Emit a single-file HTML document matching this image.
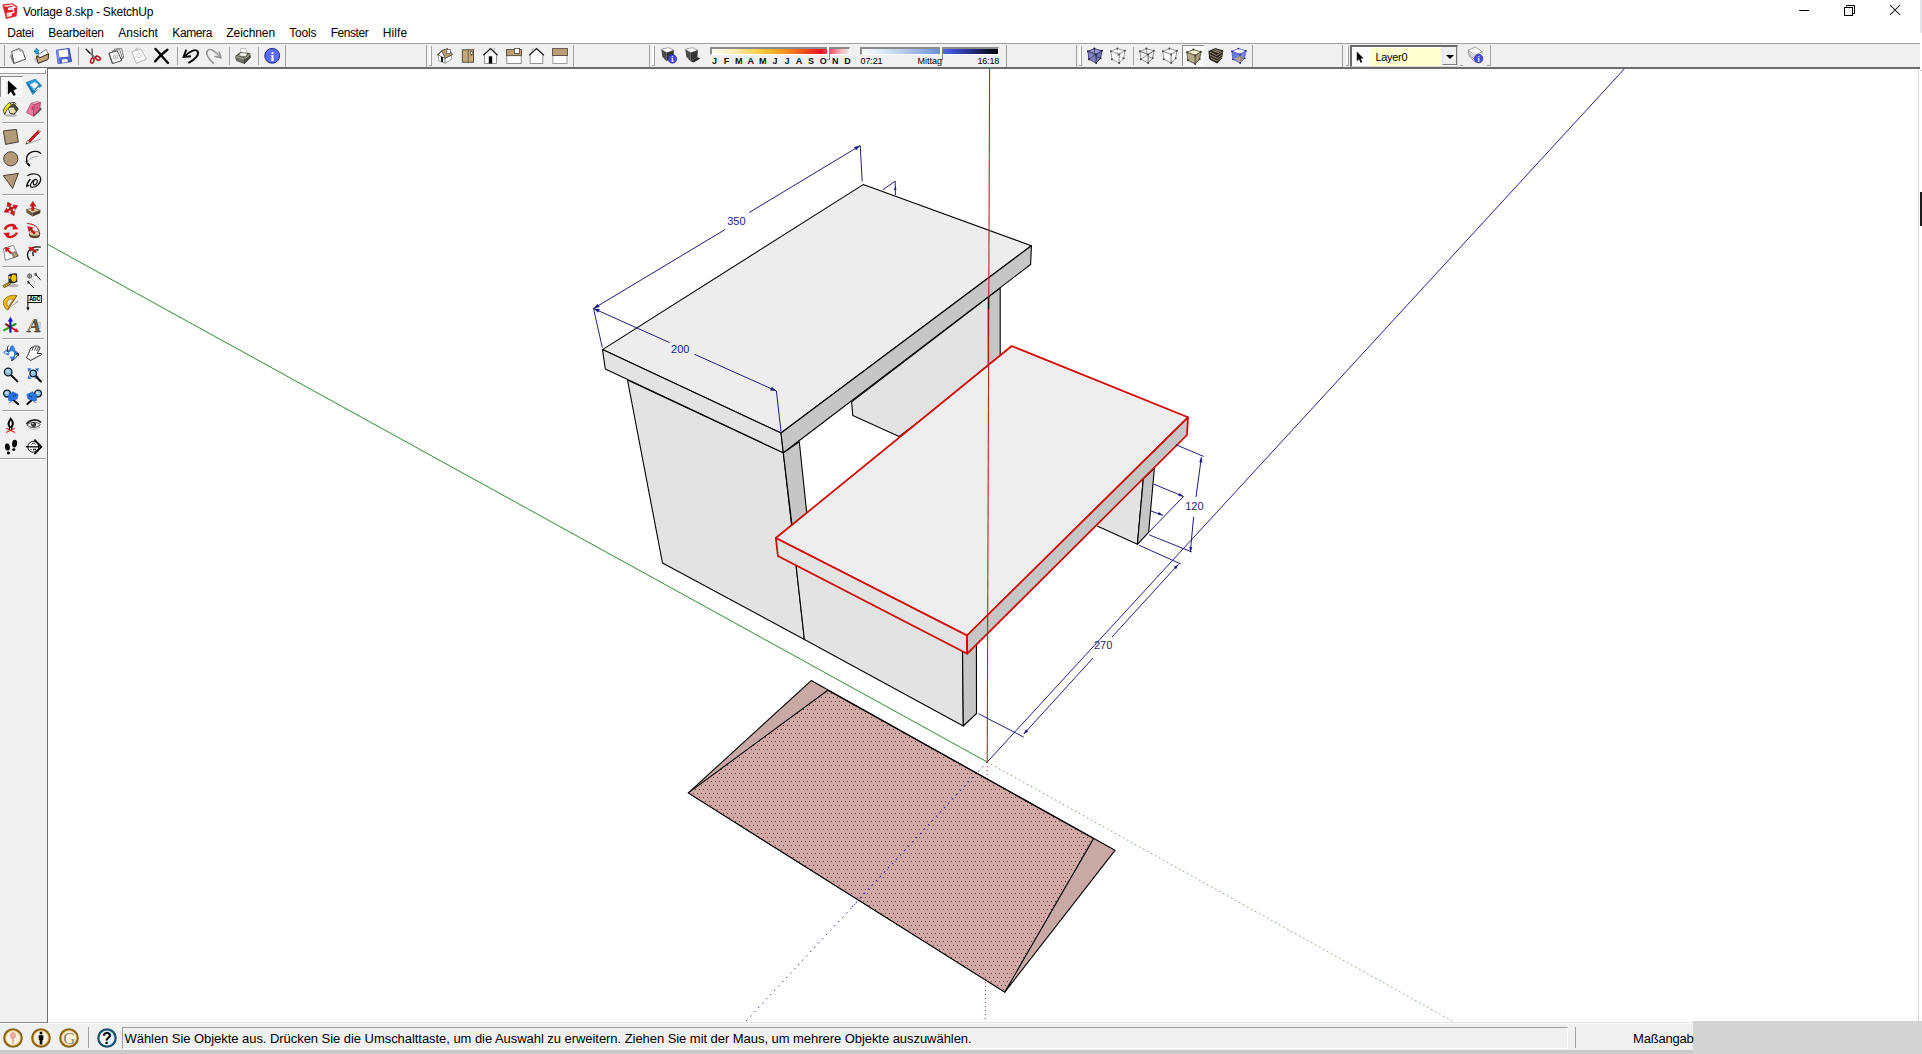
<!DOCTYPE html>
<html lang="de"><head><meta charset="utf-8"><title>Vorlage 8.skp - SketchUp</title>
<style>
*{box-sizing:border-box}
html,body{margin:0;padding:0}
body{width:1922px;height:1054px;overflow:hidden;background:#fff;font-family:"Liberation Sans",sans-serif;font-size:12px;color:#000;position:relative}
.abs{position:absolute}
.t{position:absolute;white-space:nowrap;line-height:1}
#title{left:23px;top:6px;font-size:12px;letter-spacing:-0.22px}
.menu{top:27px;font-size:12px}
#tb{left:0;top:43px;width:1920px;height:26px;background:#f0f0f0;border-top:1px solid #a0a0a0;border-bottom:2px solid #6d6d6d}
#ltb{left:0;top:68px;width:48px;height:955px;background:#f0f0f0;border-right:1.6px solid #6d6d6d;border-bottom:1px solid #8c8c8c}
#status{left:0;top:1022px;width:1920px;height:28px;background:#f0f0f0;border-top:1px solid #e6e6e6;box-shadow:inset 0 1px 0 #fcfcfc}
#botstrip{left:0;top:1050px;width:1922px;height:4px;background:#c9c9c9}
#greyblk{left:1693px;top:1021px;width:229px;height:33px;background:#d3d3d3}
#redge{left:1918px;top:69px;width:1px;height:952px;background:#d9d9d9}
#mon2{left:1920px;top:0;width:2px;height:33px;background:#e3e5ea}
#mon2b{left:1920px;top:192px;width:2px;height:34px;background:#1a1a1a}
#mon2c{left:1920px;top:70px;width:2px;height:1px;background:#c8c8c8}
.vsep{position:absolute;width:1px;background:#a0a0a0;top:46px;height:20px}
.vsepw{position:absolute;width:1px;background:#fff;top:46px;height:20px}
.hsep{position:absolute;left:3px;width:41px;height:1px;background:#a0a0a0}

.ic{position:absolute;overflow:visible}
.sl{position:absolute;height:8px;border-top:2px solid #8c8c8c;border-left:2px solid #8c8c8c;border-bottom:1px solid #fff;border-right:1px solid #fff}
.mon{position:absolute;top:56.5px;font-size:9px;font-weight:bold;line-height:1;width:12px;text-align:center;color:#111}
.tm{position:absolute;top:57px;font-size:9px;line-height:1;color:#000;white-space:nowrap}
</style></head>
<body>
<div class="t" id="title">Vorlage 8.skp - SketchUp</div>
<div class="t menu" style="left:7.3px;letter-spacing:-0.32px">Datei</div>
<div class="t menu" style="left:48.3px;letter-spacing:-0.26px">Bearbeiten</div>
<div class="t menu" style="left:118.3px;letter-spacing:0.05px">Ansicht</div>
<div class="t menu" style="left:172.3px;letter-spacing:-0.39px">Kamera</div>
<div class="t menu" style="left:226.3px;letter-spacing:-0.08px">Zeichnen</div>
<div class="t menu" style="left:289.3px;letter-spacing:-0.20px">Tools</div>
<div class="t menu" style="left:330.7px;letter-spacing:-0.44px">Fenster</div>
<div class="t menu" style="left:382.7px;letter-spacing:0.12px">Hilfe</div>
<div class="abs" id="tb"></div>
<div class="abs" id="status"></div>
<div class="abs" id="ltb"></div>
<div class="abs" id="botstrip"></div>
<div class="abs" id="greyblk"></div><div class="abs" id="redge"></div><div class="abs" id="mon2"></div><div class="abs" id="mon2b"></div><div class="abs" id="mon2c"></div>
<svg class="abs" style="left:0;top:0" width="1922" height="1054" viewBox="0 0 1922 1054">
<defs><clipPath id="vp"><rect x="48" y="69" width="1870" height="953"/></clipPath>
<pattern id="dots" width="4" height="8" patternUnits="userSpaceOnUse"><rect width="4" height="8" fill="#cfaaa6"/><rect x="1" y="1" width="1" height="1" fill="#7c3034"/><rect x="3" y="5" width="1" height="1" fill="#7c3034"/></pattern>
</defs>
<g clip-path="url(#vp)" stroke-linejoin="round" stroke-linecap="butt">
<g fill="none" stroke-width="1">
<line x1="987.2" y1="762.0" x2="48" y2="244.5" stroke="#2a902a"/>
<line x1="987.2" y1="762.0" x2="1627" y2="66" stroke="#20208f"/>
<line x1="987.2" y1="762.0" x2="1500" y2="1047.6" stroke="#3a9a3a" stroke-dasharray="1.2 3.38"/>
<line x1="987.2" y1="762.0" x2="720" y2="1049" stroke="#20208f" stroke-dasharray="1.4 4.47"/>
<line x1="987.2" y1="762.0" x2="985.2" y2="1030" stroke="#b03030" stroke-dasharray="1.2 2.8"/>
</g>
<polygon points="811.2,680.6 1115.0,850.3 1004.8,992.1 688.3,792.9" fill="#c9a9a6" stroke="#000" stroke-width="1.1"/>
<polygon points="827.8,690.2 1093.5,838.6 1004.8,992.1 688.3,792.9" fill="url(#dots)" stroke="#000" stroke-width="1.1"/>
<line x1="973" y1="777" x2="850" y2="909" stroke="#3a2a9a" stroke-width="1.1" stroke-dasharray="1.4 4.47"/>
<g stroke="#000" stroke-width="1.1">
<polygon points="851.6,401.9 988.4,297.0 988.4,370.0 899.1,436.5 852.8,415.6" fill="#e3e3e3"/>
<polygon points="988.4,297.0 1000.2,288.1 1000.2,356.0 988.4,366.0" fill="#c6c6c6"/>
<polygon points="627.5,380.0 783.3,452.8 804.4,639.5 662.5,563.0" fill="#e3e3e3"/>
<polygon points="783.3,452.8 799.3,441.8 808.0,525.0 792.0,525.0" fill="#c6c6c6"/>
<polygon points="795.5,560.0 962.5,645.0 963.3,726.0 804.4,639.5" fill="#e3e3e3"/>
<polygon points="962.5,645.0 976.4,633.0 976.5,713.5 963.3,726.0" fill="#c6c6c6"/>
<polygon points="1097.2,526.0 1137.4,544.3 1143.3,478.9 1103.0,460.0" fill="#e3e3e3" stroke="none"/>
<polyline points="1097.2,526.0 1137.4,544.3 1143.3,478.9" fill="none"/>
<polygon points="1143.3,478.9 1154.4,468.3 1148.6,532.4 1137.4,544.3" fill="#c6c6c6"/>
<polygon points="863.2,184.6 1031.4,245.7 781.0,433.0 602.5,349.6" fill="#ededed"/>
<polygon points="602.5,349.6 781.0,433.0 783.3,452.8 605.3,369.0" fill="#e3e3e3"/>
<polygon points="781.0,433.0 1031.4,245.7 1030.6,264.5 783.3,452.8" fill="#c6c6c6"/>
</g>
<g stroke="#d60000" stroke-width="1.7">
<polygon points="1011.7,346.0 1188.0,417.3 967.0,635.5 775.8,538.0" fill="#eeeeee"/>
<polygon points="775.8,538.0 967.0,635.5 967.3,653.7 777.9,556.0" fill="#e3e3e3"/>
<polygon points="967.0,635.5 1188.0,417.3 1187.0,435.0 967.3,653.7" fill="#c6c6c6"/>
</g>
<line x1="987.2" y1="762.0" x2="989.6" y2="66" stroke="#b92626" stroke-width="1.1"/>
<line x1="988.7" y1="296" x2="988.6" y2="309" stroke="#301010" stroke-width="1.2"/>
<g stroke="#1e1e80" stroke-width="1" fill="none">
<path d="M593.5 308.5L725 229.6M749.2 212.5L860.2 145.6M860.2 145.6L862.2 181.5M593.5 308.5L602.3 347.5"/>
<path d="M593.5 308.5L669.6 342.6M694.5 354.3L776.4 391M776.4 391L781 431.5"/>
<path d="M883 189.7L895.2 181.2M895.2 181L895.4 195"/>
<path d="M1175.8 444.7L1203.6 456.4M1201.4 457.2L1196 497M1193.6 517L1190.3 552M1149.3 534.9L1192 552"/>
<path d="M1153.6 484L1183.5 496.5L1149 532M1151 511L1163 515.3"/>
<path d="M1023.7 734.1L1093 658M1112 637L1178.3 564.4M978.5 713.7L1023.7 737.1M1139 545.2L1180.9 564"/>
</g>
<polygon points="860.2,145.6 856.1,150.4 854.0,147.0" fill="#1e1e80"/>
<polygon points="593.5,308.5 597.6,303.7 599.7,307.1" fill="#1e1e80"/>
<polygon points="776.4,391.0 770.1,390.4 771.8,386.7" fill="#1e1e80"/>
<polygon points="593.5,308.5 599.8,309.1 598.1,312.8" fill="#1e1e80"/>
<polygon points="1201.4,457.2 1202.4,462.4 1199.2,462.0" fill="#1e1e80"/>
<polygon points="1190.3,552.0 1189.3,546.8 1192.5,547.2" fill="#1e1e80"/>
<polygon points="1178.3,564.4 1176.1,569.2 1173.7,567.0" fill="#1e1e80"/>
<polygon points="1023.7,734.1 1025.9,729.3 1028.3,731.5" fill="#1e1e80"/>
<polygon points="1183.5,496.5 1178.3,496.0 1179.5,493.1" fill="#1e1e80"/>
<polygon points="1163.0,515.3 1157.8,515.1 1158.8,512.1" fill="#1e1e80"/>
<polygon points="895.3,186.0 896.6,190.0 894.0,190.0" fill="#1e1e80"/>
<g fill="#1e1e80" font-family="Liberation Sans, sans-serif" font-size="11" text-anchor="middle">
<text x="736.4" y="225">350</text><text x="680.3" y="353">200</text><text x="1194.4" y="510.2">120</text><text x="1103.1" y="649">270</text>
</g>
</g></svg>
<div class="abs" style="left:4px;top:45px;width:1px;height:21px;background:#a0a0a0"></div>
<svg class="ic" style="left:10px;top:48px" width="16" height="16" viewBox="0 0 16 16"><path d="M1 6.5L0.6 8.5 3.5 15.6 5 15" fill="#888" stroke="#666" stroke-width=".6"/><polygon points="1.7,3.6 9,0.6 12.6,2.6 15.5,11.2 4,15.4" fill="#fff" stroke="#3c3c3c" stroke-width=".9"/><path d="M9 .6L10 3.4 12.6 2.6" fill="#ddd" stroke="#666" stroke-width=".7"/></svg>
<svg class="ic" style="left:33px;top:48px" width="16" height="16" viewBox="0 0 16 16"><polygon points="3.3,8.2 5.2,15.3 15,11.4 15.7,5.9 13.5,6.5" fill="#c3a67a" stroke="#3a2c1c" stroke-width=".9"/><polygon points="4.8,7 13.1,1.4 15.2,5.6 6.9,9.8" fill="#fff" stroke="#555" stroke-width=".7"/><polygon points="3.3,8.2 6.9,9.8 15.7,5.9 15,11.4 5.2,15.3" fill="#c3a67a" stroke="#3a2c1c" stroke-width=".8"/><path d="M3.5 .2L6 2.8 4.9 3 5.6 5.6 3 6 2.4 3.6 1.2 3.9Z" fill="#2ea7e0" stroke="#0d5d8c" stroke-width=".7"/><path d="M1 10l2.4 0 .6 3.5-2 .3z" fill="#999" opacity=".6"/></svg>
<svg class="ic" style="left:56px;top:48px" width="16" height="16" viewBox="0 0 16 16"><polygon points="0.4,2.2 13.2,0.4 15.6,13.6 2,15.6" fill="#4e5fcf" stroke="#2b3a9c" stroke-width=".8"/><polygon points="2.3,2.4 11.6,1.2 12.6,8.6 3.4,9.6" fill="#fff"/><polygon points="5.8,11.6 11.3,10.9 11.8,14 6.3,14.7" fill="#fff"/><path d="M0.4 2.2L2 15.6 3.6 15.3 2.2 2z" fill="#7f8df0"/></svg>
<div class="abs" style="left:78px;top:47px;width:1px;height:18px;background:#a0a0a0"></div>
<svg class="ic" style="left:85px;top:48px" width="16" height="16" viewBox="0 0 16 16"><path d="M0.8 .8L10.5 10" stroke="#777" stroke-width="1.6" fill="none"/><path d="M0.8 .8L5 5.6" stroke="#222" stroke-width="1.1"/><path d="M6.9 .4L7.6 9.5" stroke="#666" stroke-width="1.5"/><ellipse cx="7.3" cy="12.6" rx="1.6" ry="2.6" transform="rotate(18 7.3 12.6)" fill="none" stroke="#b00d12" stroke-width="1.5"/><ellipse cx="12.9" cy="10.2" rx="2.6" ry="1.7" transform="rotate(35 12.9 10.2)" fill="none" stroke="#b00d12" stroke-width="1.5"/></svg>
<svg class="ic" style="left:108px;top:48px" width="16" height="16" viewBox="0 0 16 16"><polygon points="6.5,1 13.6,0.6 15.8,9.8 9,11.5" fill="#fff" stroke="#5a5a5a" stroke-width=".8"/><polygon points="4.5,2.6 11.6,1.6 14.6,10.6 8,12.4" fill="#fff" stroke="#5a5a5a" stroke-width=".8"/><polygon points="1.1,5.1 9.3,2.9 13.8,12.6 4.7,15.5" fill="#fff" stroke="#333" stroke-width=".9"/><circle cx="7.6" cy="9" r="2.3" fill="none" stroke="#999" stroke-width=".8"/><circle cx="7.6" cy="9" r=".8" fill="#888"/><path d="M1.1 5.1L.6 6.5 4 15.9 4.7 15.5" fill="#555"/></svg>
<svg class="ic" style="left:131px;top:48px" width="16" height="16" viewBox="0 0 16 16"><polygon points="0.9,3.9 10,1 15.3,11 5,15.3" fill="#f6f6f6" stroke="#b4b4b4" stroke-width=".9"/><path d="M4 1.8l1-1.4 1.6-.3 .9 1z" fill="#e4e4e4" stroke="#b4b4b4" stroke-width=".7"/><circle cx="8" cy="7.6" r="2.2" fill="none" stroke="#cfcfcf" stroke-width=".8"/><path d="M5 15.3l10.3-4.3.3.9-10.3 4.2z" fill="#c9c9c9"/></svg>
<svg class="ic" style="left:154px;top:48px" width="16" height="16" viewBox="0 0 16 16"><path d="M1.4 .9C5 4.5 9.5 10 14 15" stroke="#0a0a0a" stroke-width="2.3" fill="none" stroke-linecap="round"/><path d="M13.4 1.8C9 5 4.5 9.5 1 13.4" stroke="#0a0a0a" stroke-width="2.3" fill="none" stroke-linecap="round"/></svg>
<div class="abs" style="left:176.5px;top:47px;width:1px;height:18px;background:#a0a0a0"></div>
<svg class="ic" style="left:183px;top:48px" width="16" height="16" viewBox="0 0 16 16"><path d="M6 14.6C12.5 11 16.5 6.5 14.6 3.4 12.6 .2 6.5 3.6 2.4 7.6" stroke="#0a0a0a" stroke-width="1.9" fill="none" stroke-linecap="round"/><path d="M3.2 1.6L.6 8.9 8 8.2" fill="none" stroke="#0a0a0a" stroke-width="1.9" stroke-linejoin="miter"/></svg>
<svg class="ic" style="left:206px;top:48px" width="16" height="16" viewBox="0 0 16 16"><path d="M7.6 15.3C2.5 10.5-.6 5.2 1.6 2.4 4 -.4 9.6 3.6 13.4 8.2" stroke="#9a9a9a" stroke-width="1.6" fill="none" stroke-linecap="round"/><path d="M13 3.5L15 9.6 8.4 8.4" fill="none" stroke="#9a9a9a" stroke-width="1.7"/></svg>
<div class="abs" style="left:228.5px;top:47px;width:1px;height:18px;background:#a0a0a0"></div>
<svg class="ic" style="left:235px;top:48px" width="16" height="16" viewBox="0 0 16 16"><polygon points="5.4,.6 10.6,.4 12.6,6.6 6.4,7.6" fill="#fff" stroke="#999" stroke-width=".6"/><polygon points="0.4,8.4 5.2,4.6 14.8,5.4 15.4,9.6 9.6,15.6 1.6,12.6" fill="#6f7064" stroke="#3c3d35" stroke-width=".8"/><polygon points="5.8,5 12,5.4 10.4,8.2 4.2,7.6" fill="#f2f2f2"/><path d="M.4 8.4L9.4 11.2 15.4 6.4" stroke="#b7b8aa" stroke-width=".9" fill="none"/><path d="M9.4 11.2L9.6 15.6" stroke="#2f302a" stroke-width=".8"/><polygon points="9.6,11.4 15.2,7 15.4,9.6 9.6,15.4" fill="#4b4c43"/></svg>
<div class="abs" style="left:257.5px;top:47px;width:1px;height:18px;background:#a0a0a0"></div>
<svg class="ic" style="left:264px;top:48px" width="16" height="16" viewBox="0 0 16 16"><circle cx="8.2" cy="7.8" r="7.4" fill="#5a6ef2" stroke="#1c1ca0" stroke-width="1"/><text x="8.2" y="12.6" font-family="Liberation Serif,serif" font-weight="bold" font-size="13" text-anchor="middle" fill="#fff">i</text></svg>
<div class="abs" style="left:284.5px;top:45px;width:1px;height:22px;background:#a0a0a0"></div>
<div class="abs" style="left:425.5px;top:45px;width:1px;height:22px;background:#a0a0a0"></div>
<div class="abs" style="left:429px;top:46px;width:1px;height:19px;background:#fdfdfd"></div><div class="abs" style="left:430px;top:46px;width:1px;height:19px;background:#fdfdfd"></div><div class="abs" style="left:431px;top:46px;width:1px;height:20px;background:#a0a0a0"></div><div class="abs" style="left:429px;top:65px;width:3px;height:1px;background:#a0a0a0"></div>
<svg class="ic" style="left:437px;top:48px" width="16" height="16" viewBox="0 0 16 16"><polygon points="1.3,6.9 8.1,10.2 8.1,15.2 1.6,12.6" fill="#fff" stroke="#777" stroke-width=".7"/><polygon points="8.1,10.2 14.4,7 14.3,11.6 8.1,15.2" fill="#fff" stroke="#777" stroke-width=".7"/><polygon points="0.4,6.9 4.6,2.6 10.6,.5 15.7,6.4 8.1,10.4 4.7,3.4 1.2,7.4" fill="#b29c78" stroke="#4c4234" stroke-width=".8"/><polygon points="1.3,7 4.7,3.3 8.1,10.3" fill="#fff" stroke="#555" stroke-width=".6"/><rect x="9.9" y="1.6" width="3.4" height="3.8" fill="#fff" stroke="#555" stroke-width=".7"/><polygon points="4.1,8.4 5.9,9.2 5.9,14.2 4.1,13.5" fill="#000"/></svg>
<svg class="ic" style="left:460px;top:48px" width="16" height="16" viewBox="0 0 16 16"><rect x="2.3" y="1.8" width="11.3" height="12.4" fill="#c4a97e" stroke="#4c4234" stroke-width=".9"/><path d="M8.2 .8V15.2" stroke="#6a5a44" stroke-width=".9"/><rect x="10.7" y="3.4" width="1.9" height="3.8" fill="#fff" stroke="#4c4234" stroke-width=".6"/></svg>
<svg class="ic" style="left:483px;top:48px" width="16" height="16" viewBox="0 0 16 16"><polygon points="1.5,7.2 7.5,1.4 13.5,7.2 13.5,15.5 1.5,15.5" fill="#fff"/><path d="M1.5 7.2V15.5H13.5V7.2" fill="none" stroke="#777" stroke-width=".8"/><path d="M.4 7.3L7.5 .6 14.6 7.3" stroke="#111" stroke-width="1.2" fill="none"/><rect x="5.8" y="8.3" width="3.4" height="7.2" fill="#000"/><rect x="10.2" y=".8" width="1.6" height="1.8" fill="#fff" stroke="#888" stroke-width=".5"/></svg>
<svg class="ic" style="left:506px;top:48px" width="16" height="16" viewBox="0 0 16 16"><rect x=".8" y="7.6" width="14.4" height="7.9" fill="#fff" stroke="#777" stroke-width=".8"/><rect x=".4" y="1.4" width="15.2" height="6.3" fill="#b89f78" stroke="#4c4234" stroke-width=".8"/><rect x="8.6" y=".5" width="5" height="4.9" fill="#fff" stroke="#4c4234" stroke-width=".8"/></svg>
<svg class="ic" style="left:529px;top:48px" width="16" height="16" viewBox="0 0 16 16"><polygon points="1.2,7.2 7.5,1.4 13.8,7.2 13.8,15.5 1.2,15.5" fill="#fff"/><path d="M1.2 7.2V15.5H13.8V7.2" fill="none" stroke="#777" stroke-width=".8"/><path d="M.2 7.3L7.5 .6 14.9 7.3" stroke="#111" stroke-width="1.2" fill="none"/><rect x="3" y=".9" width="1.6" height="1.8" fill="#fff" stroke="#888" stroke-width=".5"/></svg>
<svg class="ic" style="left:552px;top:48px" width="16" height="16" viewBox="0 0 16 16"><rect x=".9" y="7.4" width="14.1" height="8.1" fill="#fff" stroke="#888" stroke-width=".8"/><rect x=".4" y=".6" width="15.2" height="6.8" fill="#b89f78" stroke="#4c4234" stroke-width=".8"/></svg>
<div class="abs" style="left:572.5px;top:45px;width:1px;height:22px;background:#a0a0a0"></div>
<div class="abs" style="left:648.5px;top:45px;width:1px;height:22px;background:#a0a0a0"></div>
<div class="abs" style="left:652px;top:46px;width:1px;height:19px;background:#fdfdfd"></div><div class="abs" style="left:653px;top:46px;width:1px;height:19px;background:#fdfdfd"></div><div class="abs" style="left:654px;top:46px;width:1px;height:20px;background:#a0a0a0"></div><div class="abs" style="left:652px;top:65px;width:3px;height:1px;background:#a0a0a0"></div>
<svg class="ic" style="left:661px;top:48px" width="16" height="16" viewBox="0 0 16 16"><polygon points="0.3,1.4 7.5,-.4 12.9,2.3 5.9,4.7" fill="#fff" stroke="#666" stroke-width=".6"/><polygon points="0.3,1.4 5.9,4.7 5.4,13.2 1.3,8.8" fill="#4c4c4c"/><polygon points="5.9,4.7 12.9,2.3 12.4,9 5.4,13.2" fill="#333"/><circle cx="11.4" cy="10.9" r="4.3" fill="#4848d8" stroke="#2020a0" stroke-width=".6"/><text x="11.4" y="13.8" font-family="Liberation Serif,serif" font-weight="bold" font-size="8" text-anchor="middle" fill="#fff">i</text></svg>
<svg class="ic" style="left:685px;top:48px" width="16" height="16" viewBox="0 0 16 16"><polygon points="0.3,1.4 7.5,-.4 12.9,2.3 5.9,4.7" fill="#fff" stroke="#666" stroke-width=".6"/><polygon points="0.3,1.4 5.9,4.7 5.4,13.2 1.3,8.8" fill="#4c4c4c"/><polygon points="5.9,4.7 12.9,2.3 12.4,9 5.4,13.2" fill="#333"/><polygon points="12.4,9 15.2,10.8 8.6,14.4 5.4,13.2" fill="#2e2e2e"/></svg>
<div class="sl" style="left:710px;top:47px;width:140px;background:linear-gradient(90deg,#fffdf4 0%,#fde9a8 18%,#fbc93a 36%,#f79a1e 52%,#f0401c 70%,#ec1220 80%,#f06a72 88%,#f6b6b8 94%,#fbe3e3 100%)"></div>
<div class="abs" style="left:827px;top:47px;width:3px;height:13px;background:#f6f6f6;border-right:1px solid #888;border-bottom:1px solid #888"></div>
<div class="mon" style="left:708.5px">J</div>
<div class="mon" style="left:720.6px">F</div>
<div class="mon" style="left:732.7px">M</div>
<div class="mon" style="left:744.7px">A</div>
<div class="mon" style="left:756.8px">M</div>
<div class="mon" style="left:768.9px">J</div>
<div class="mon" style="left:781.0px">J</div>
<div class="mon" style="left:793.1px">A</div>
<div class="mon" style="left:805.1px">S</div>
<div class="mon" style="left:817.2px">O</div>
<div class="mon" style="left:829.3px">N</div>
<div class="mon" style="left:841.4px">D</div>
<div class="sl" style="left:860px;top:47px;width:139px;background:linear-gradient(90deg,#fafcff 0%,#cfe0f4 20%,#9db8e6 40%,#6f8fe0 57%,#4a66e0 60%,#3a4ccc 68%,#232a7a 82%,#0a0c24 95%,#000 100%)"></div>
<div class="abs" style="left:940px;top:47px;width:3px;height:13px;background:#f6f6f6;border-right:1px solid #888;border-bottom:1px solid #888"></div>
<div class="tm" style="left:860.5px;letter-spacing:-.1px">07:21</div><div class="tm" style="left:917.5px">Mittag</div><div class="tm" style="left:977.5px;letter-spacing:-.2px">16:18</div>
<div class="abs" style="left:1006px;top:45px;width:1px;height:22px;background:#a0a0a0"></div>
<div class="abs" style="left:1075.5px;top:45px;width:1px;height:22px;background:#a0a0a0"></div>
<div class="abs" style="left:1079px;top:46px;width:1px;height:19px;background:#fdfdfd"></div><div class="abs" style="left:1080px;top:46px;width:1px;height:19px;background:#fdfdfd"></div><div class="abs" style="left:1081px;top:46px;width:1px;height:20px;background:#a0a0a0"></div><div class="abs" style="left:1079px;top:65px;width:3px;height:1px;background:#a0a0a0"></div>
<svg class="ic" style="left:1087px;top:48px" width="16" height="16" viewBox="0 0 16 16"><polygon points="7.4,0.6 14.9,2.8 9.2,6.4 0.9,3.3" fill="#9c9cd6" stroke="#3a3a6a" stroke-width="0.9"/><polygon points="0.9,3.3 9.2,6.4 9.2,15 1.9,11.3" fill="#8585c4" stroke="#3a3a6a" stroke-width="0.9"/><polygon points="9.2,6.4 14.9,2.8 13.6,10.3 9.2,15" fill="#7474b0" stroke="#3a3a6a" stroke-width="0.9"/><path d="M7.4 7.6L7.4 0.6M7.4 7.6L1.9 11.3M7.4 7.6L13.6 10.3" stroke="#3a3a6a" stroke-width="0.8" fill="none"  /><circle cx="7.4" cy="0.6" r="1" fill="#1c1c3a"/><circle cx="0.9" cy="3.3" r="1" fill="#1c1c3a"/><circle cx="14.9" cy="2.8" r="1" fill="#1c1c3a"/><circle cx="9.2" cy="6.4" r="1" fill="#1c1c3a"/><circle cx="1.9" cy="11.3" r="1" fill="#1c1c3a"/><circle cx="13.6" cy="10.3" r="1" fill="#1c1c3a"/><circle cx="9.2" cy="15" r="1" fill="#1c1c3a"/></svg>
<svg class="ic" style="left:1110px;top:48px" width="16" height="16" viewBox="0 0 16 16"><polygon points="7.4,0.6 14.9,2.8 9.2,6.4 0.9,3.3" fill="#fff" stroke="#9a9a9a" stroke-width="0.9"/><polygon points="0.9,3.3 9.2,6.4 9.2,15 1.9,11.3" fill="#fff" stroke="#9a9a9a" stroke-width="0.9"/><polygon points="9.2,6.4 14.9,2.8 13.6,10.3 9.2,15" fill="#fff" stroke="#9a9a9a" stroke-width="0.9"/><path d="M7.4 7.6L7.4 0.6M7.4 7.6L1.9 11.3M7.4 7.6L13.6 10.3" stroke="#9a9a9a" stroke-width="0.8" fill="none" stroke-dasharray="1 1.6"/><circle cx="7.4" cy="0.6" r="1" fill="#444"/><circle cx="0.9" cy="3.3" r="1" fill="#444"/><circle cx="14.9" cy="2.8" r="1" fill="#444"/><circle cx="9.2" cy="6.4" r="1" fill="#444"/><circle cx="1.9" cy="11.3" r="1" fill="#444"/><circle cx="13.6" cy="10.3" r="1" fill="#444"/><circle cx="9.2" cy="15" r="1" fill="#444"/></svg>
<div class="abs" style="left:1132.5px;top:47px;width:1px;height:18px;background:#a0a0a0"></div>
<svg class="ic" style="left:1139px;top:48px" width="16" height="16" viewBox="0 0 16 16"><polygon points="7.4,0.6 14.9,2.8 9.2,6.4 0.9,3.3" fill="none" stroke="#8a8a8a" stroke-width="0.9"/><polygon points="0.9,3.3 9.2,6.4 9.2,15 1.9,11.3" fill="none" stroke="#8a8a8a" stroke-width="0.9"/><polygon points="9.2,6.4 14.9,2.8 13.6,10.3 9.2,15" fill="none" stroke="#8a8a8a" stroke-width="0.9"/><path d="M7.4 7.6L7.4 0.6M7.4 7.6L1.9 11.3M7.4 7.6L13.6 10.3" stroke="#8a8a8a" stroke-width="0.8" fill="none"  /><circle cx="7.4" cy="0.6" r="1" fill="#444"/><circle cx="0.9" cy="3.3" r="1" fill="#444"/><circle cx="14.9" cy="2.8" r="1" fill="#444"/><circle cx="9.2" cy="6.4" r="1" fill="#444"/><circle cx="1.9" cy="11.3" r="1" fill="#444"/><circle cx="13.6" cy="10.3" r="1" fill="#444"/><circle cx="9.2" cy="15" r="1" fill="#444"/></svg>
<svg class="ic" style="left:1162px;top:48px" width="16" height="16" viewBox="0 0 16 16"><polygon points="7.4,0.6 14.9,2.8 9.2,6.4 0.9,3.3" fill="#fff" stroke="#8a8a8a" stroke-width="0.9"/><polygon points="0.9,3.3 9.2,6.4 9.2,15 1.9,11.3" fill="#fff" stroke="#8a8a8a" stroke-width="0.9"/><polygon points="9.2,6.4 14.9,2.8 13.6,10.3 9.2,15" fill="#fff" stroke="#8a8a8a" stroke-width="0.9"/><circle cx="7.4" cy="0.6" r="1" fill="#444"/><circle cx="0.9" cy="3.3" r="1" fill="#444"/><circle cx="14.9" cy="2.8" r="1" fill="#444"/><circle cx="9.2" cy="6.4" r="1" fill="#444"/><circle cx="1.9" cy="11.3" r="1" fill="#444"/><circle cx="13.6" cy="10.3" r="1" fill="#444"/><circle cx="9.2" cy="15" r="1" fill="#444"/></svg>
<div class="abs" style="left:1182px;top:45px;width:22px;height:21px;background:#f9f9f9;border-top:1px solid #8a8a8a;border-left:1px solid #8a8a8a"></div>
<svg class="ic" style="left:1186px;top:49px" width="16" height="16" viewBox="0 0 16 16"><polygon points="7.4,0.6 14.9,2.8 9.2,6.4 0.9,3.3" fill="#f4f4c6" stroke="#5a5444" stroke-width="0.9"/><polygon points="0.9,3.3 9.2,6.4 9.2,15 1.9,11.3" fill="#b4ab8c" stroke="#5a5444" stroke-width="0.9"/><polygon points="9.2,6.4 14.9,2.8 13.6,10.3 9.2,15" fill="#a49a7c" stroke="#5a5444" stroke-width="0.9"/><circle cx="7.4" cy="0.6" r="1" fill="#333"/><circle cx="0.9" cy="3.3" r="1" fill="#333"/><circle cx="14.9" cy="2.8" r="1" fill="#333"/><circle cx="9.2" cy="6.4" r="1" fill="#333"/><circle cx="1.9" cy="11.3" r="1" fill="#333"/><circle cx="13.6" cy="10.3" r="1" fill="#333"/><circle cx="9.2" cy="15" r="1" fill="#333"/></svg>
<svg class="ic" style="left:1208px;top:48px" width="16" height="16" viewBox="0 0 16 16"><polygon points="7.4,0.6 14.9,2.8 9.2,6.4 0.9,3.3" fill="#3a3424" stroke="#1a160e" stroke-width="0.9"/><polygon points="0.9,3.3 9.2,6.4 9.2,15 1.9,11.3" fill="#2a251a" stroke="#1a160e" stroke-width="0.9"/><polygon points="9.2,6.4 14.9,2.8 13.6,10.3 9.2,15" fill="#1f1b12" stroke="#1a160e" stroke-width="0.9"/><path d="M2 4.2L8.8 7.4 14.6 3.8M2.2 7L9 10.4 14.2 6.6M2.4 9.8L9 13 13.9 9.2M4.5 2.4L11 4.6M6.5 1.4L12.8 3.6" stroke="#c8c0a0" stroke-width=".7" fill="none"/></svg>
<svg class="ic" style="left:1231px;top:48px" width="16" height="16" viewBox="0 0 16 16"><polygon points="7.4,.6 14.9,2.8 9.2,6.4 .9,3.3" fill="#fff" stroke="#5a6ad8" stroke-width=".9"/><polygon points=".9,3.3 9.2,6.4 9.2,15 1.9,11.3" fill="#6a7ae4" stroke="#4a5ad0" stroke-width=".8"/><polygon points="9.2,6.4 14.9,2.8 13.6,10.3 9.2,15" fill="#7a86e0" stroke="#4a5ad0" stroke-width=".8"/><polygon points="3,10.6 9.2,8 9.2,15" fill="#b4a486"/><polygon points="9.2,8 13.2,9.6 9.2,15" fill="#9c8e72"/><circle cx="7.4" cy="0.6" r=".9" fill="#2a2a6a"/><circle cx="0.9" cy="3.3" r=".9" fill="#2a2a6a"/><circle cx="14.9" cy="2.8" r=".9" fill="#2a2a6a"/><circle cx="9.2" cy="6.4" r=".9" fill="#2a2a6a"/><circle cx="1.9" cy="11.3" r=".9" fill="#2a2a6a"/><circle cx="13.6" cy="10.3" r=".9" fill="#2a2a6a"/><circle cx="9.2" cy="15" r=".9" fill="#2a2a6a"/></svg>
<div class="abs" style="left:1251.5px;top:45px;width:1px;height:22px;background:#a0a0a0"></div>
<div class="abs" style="left:1342px;top:45px;width:1px;height:22px;background:#a0a0a0"></div>
<div class="abs" style="left:1345.5px;top:46px;width:1px;height:19px;background:#fdfdfd"></div><div class="abs" style="left:1346.5px;top:46px;width:1px;height:19px;background:#fdfdfd"></div><div class="abs" style="left:1347.5px;top:46px;width:1px;height:20px;background:#a0a0a0"></div><div class="abs" style="left:1345.5px;top:65px;width:3px;height:1px;background:#a0a0a0"></div>
<div class="abs" style="left:1350px;top:45px;width:108px;height:22px;background:#fff;border-top:2px solid #6a6a6a;border-left:2px solid #6a6a6a;border-right:1px solid #d8d8d8;border-bottom:1px solid #d8d8d8"></div>
<div class="abs" style="left:1370px;top:48px;width:71px;height:18px;background:#ffffd2"></div>
<svg class="ic" style="left:1356px;top:51px" width="8" height="12" viewBox="0 0 8 12"><path d="M.8 .6V10.2L3 8.2 4.7 11.8 6.3 11 4.6 7.6H7.6Z" fill="#000"/></svg>
<div class="t" style="left:1375.5px;top:51.5px;font-size:11px;letter-spacing:-.32px">Layer0</div>
<div class="abs" style="left:1442px;top:47px;width:15px;height:18px;background:#f0f0f0;border-left:1px solid #e4e4e4;border-right:1px solid #7a7a7a;border-bottom:1px solid #7a7a7a"></div>
<svg class="ic" style="left:1445.5px;top:55px" width="8" height="4" viewBox="0 0 8 4"><polygon points="0,0 8,0 4,4" fill="#000"/></svg>
<svg class="ic" style="left:1467px;top:47px" width="16" height="16" viewBox="0 0 16 16"><polygon points="1.2,3 8.4,.2 15.2,4.6 8,8.4" fill="#fff" stroke="#8a8a8a" stroke-width=".8"/><path d="M1.2 3L1.6 5.4 8.2 11 M1.6 5.4L2 7.6 8.6 13.4M2 7.6 2.4 9.6 8.8 15.4" stroke="#8a8a8a" stroke-width=".8" fill="none"/><path d="M15.2 4.6L15 7.4" stroke="#8a8a8a" stroke-width=".8"/><polygon points="1.6,5.4 8,8.4 8,10.8" fill="#e4e4e4"/><circle cx="11.6" cy="11.6" r="4.3" fill="#4a4ad8" stroke="#2222a0" stroke-width=".6"/><text x="11.6" y="14.5" font-family="Liberation Serif,serif" font-weight="bold" font-size="8" text-anchor="middle" fill="#fff">i</text></svg>
<div class="abs" style="left:1489.5px;top:45px;width:1px;height:21px;background:#a0a0a0"></div>
<div class="abs" style="left:1459.5px;top:65px;width:3px;height:1px;background:#a0a0a0"></div><div class="abs" style="left:1487px;top:65px;width:3px;height:1px;background:#a0a0a0"></div>
<svg class="ic" style="left:1797px;top:3px" width="16" height="16" viewBox="0 0 16 16"><path d="M2.2 7.5H12.2" stroke="#000" stroke-width="1"/></svg>
<svg class="ic" style="left:1841px;top:2px" width="16" height="16" viewBox="0 0 16 16"><path d="M5.5 4.5V3.5H13.5V11.5H12" stroke="#000" stroke-width="1" fill="none"/><rect x="3.5" y="5.5" width="8" height="8" fill="#fff" stroke="#000" stroke-width="1"/></svg>
<svg class="ic" style="left:1887px;top:2px" width="16" height="16" viewBox="0 0 16 16"><path d="M3 3L13 13M13 3L3 13" stroke="#000" stroke-width="1.05"/></svg>
<svg class="ic" style="left:2px;top:3px" width="16" height="16" viewBox="0 0 16 16"><polygon points=".4,1.4 10.6,.2 15.4,3.6 14.6,13.2 4,16 " fill="#e0242a"/><path d="M2.4 3.2L10 2.2 13 4.2 6.6 5.2 6.8 6.6 11.4 5.8 11.6 9.4 5.2 10.6 5.6 13.2 9 12.4 9 11 6.6 11.4" fill="none" stroke="#fff" stroke-width="1.3"/></svg>
<div class="abs" style="left:0;top:69px;width:46px;height:4px;background:#fbfbfb"></div>
<div class="abs" style="left:0;top:73px;width:46px;height:1px;background:#a0a0a0"></div>
<div class="abs" style="left:45px;top:70px;width:1px;height:4px;background:#a0a0a0"></div>
<div class="abs" style="left:2px;top:122px;width:42px;height:1px;background:#a0a0a0"></div><div class="abs" style="left:2px;top:123px;width:42px;height:1px;background:#fff"></div>
<div class="abs" style="left:2px;top:194px;width:42px;height:1px;background:#a0a0a0"></div><div class="abs" style="left:2px;top:195px;width:42px;height:1px;background:#fff"></div>
<div class="abs" style="left:2px;top:266px;width:42px;height:1px;background:#a0a0a0"></div><div class="abs" style="left:2px;top:267px;width:42px;height:1px;background:#fff"></div>
<div class="abs" style="left:2px;top:338px;width:42px;height:1px;background:#a0a0a0"></div><div class="abs" style="left:2px;top:339px;width:42px;height:1px;background:#fff"></div>
<div class="abs" style="left:2px;top:410px;width:42px;height:1px;background:#a0a0a0"></div><div class="abs" style="left:2px;top:411px;width:42px;height:1px;background:#fff"></div>
<div class="abs" style="left:0;top:458px;width:46px;height:1px;background:#a0a0a0"></div><div class="abs" style="left:0;top:459px;width:46px;height:1px;background:#fff"></div>
<div class="abs" style="left:0;top:76px;width:23px;height:21px;background:#f9f9f9;border-top:1px solid #8a8a8a;border-left:1px solid #8a8a8a"></div>
<svg class="ic" style="left:4px;top:80px" width="16" height="16" viewBox="0 0 16 16"><path d="M4 .6V14.6L6.9 11.6 9.6 16 11.8 14.8 9.4 10.6 13 8.4Z" fill="#000"/><path d="M3.2 1.6V14.6" stroke="#bbb" stroke-width=".8"/></svg>
<svg class="ic" style="left:26px;top:79px" width="16" height="16" viewBox="0 0 16 16"><polygon points="0.2,3.6 9.4,.2 15.6,6.6 6.8,15.4" fill="#2d9be0" stroke="#1670b0" stroke-width=".8"/><polygon points="4.2,5.4 9.2,3 13,6.8 8,9.4" fill="#fff"/><polygon points="8,10.6 13,8 13.4,9.4 8.2,12.2" fill="#fff"/><polygon points="4.2,5.4 8,9.4 8,10.6 4.2,6.6" fill="#9ad0f0"/><path d="M2 4.6L7 13.4M13.4 5.6L7.2 13.6" stroke="#0d5a94" stroke-width="1" fill="none"/></svg>
<svg class="ic" style="left:3px;top:101px" width="16" height="16" viewBox="0 0 16 16"><ellipse cx="8" cy="14.4" rx="6" ry="1.4" fill="#b8b8b8"/><path d="M6.6 3.6C8 .6 12.6 .6 13 3.6" stroke="#333" stroke-width="1" fill="none"/><polygon points="5,6.4 10.8,2.4 15.4,8 11.4,13.2 7,12.4" fill="#4a4a3a" stroke="#222" stroke-width=".7"/><polygon points="5.4,7 10.4,6.6 13,10.4 10.6,12.6 7.2,11.8" fill="#e8deaa"/><path d="M7 1.4C3.5 3.4 .6 7 .4 10.4L1.8 13.6C3 9.4 4.6 7.2 8.4 4.2Z" fill="#f4ee10" stroke="#222" stroke-width=".8"/></svg>
<svg class="ic" style="left:26px;top:101px" width="16" height="16" viewBox="0 0 16 16"><polygon points="6.4,12.4 14.8,6.4 15.6,8.6 8,15.8" fill="#4a4a4a"/><polygon points="5,2.2 11.2,.4 14.6,1.4 8.2,3.8" fill="#f4a6bc" stroke="#b85c7a" stroke-width=".6"/><polygon points="5,2.2 8.2,3.8 7.4,15.2 .4,11.6" fill="#e87a9c" stroke="#b04a6c" stroke-width=".7"/><polygon points="8.2,3.8 14.6,1.4 13.6,8.6 7.4,15.2" fill="#d86088" stroke="#a03c60" stroke-width=".7"/><polygon points="6.2,5 7.4,5.6 7,9 5.4,8.2" fill="#b84468"/></svg>
<svg class="ic" style="left:3px;top:129px" width="16" height="16" viewBox="0 0 16 16"><polygon points="0.4,1.9 13.4,.4 15.3,13 2.6,15.4" fill="#b09a7a" stroke="#4a4034" stroke-width="1"/></svg>
<svg class="ic" style="left:26px;top:129px" width="16" height="16" viewBox="0 0 16 16"><path d="M3.6 14.1L14.8 10" stroke="#aaa" stroke-width="1"/><path d="M3 12.4L13.6 1.6" stroke="#7a0a10" stroke-width="2.8"/><path d="M3 12.4L13.6 1.6" stroke="#e0121c" stroke-width="1.8"/><path d="M12.6 2.6L13.8 1.4" stroke="#f4a0b0" stroke-width="2"/><polygon points="-.2,15.2 1.6,11.2 4.2,13.6" fill="#f0e0a0" stroke="#444" stroke-width=".5"/><polygon points="-.2,15.2 .6,13.4 1.8,14.4" fill="#222"/></svg>
<svg class="ic" style="left:3px;top:151px" width="16" height="16" viewBox="0 0 16 16"><circle cx="7.8" cy="7.8" r="7.1" fill="#b09a7a" stroke="#4a4034" stroke-width="1"/></svg>
<svg class="ic" style="left:26px;top:151px" width="16" height="16" viewBox="0 0 16 16"><path d="M3.8 15C-.6 11 -.6 4.6 4.4 1.6 8.4 -.6 13 .4 15 2.6" stroke="#111" stroke-width="1.3" fill="none"/><path d="M3.8 15C1.6 13.4 .6 11.6 .4 10" stroke="#111" stroke-width="2" fill="none"/><path d="M1 12.4C2.4 8 7 5.4 12.4 5.4" stroke="#999" stroke-width=".9" fill="none"/></svg>
<svg class="ic" style="left:3px;top:173px" width="16" height="16" viewBox="0 0 16 16"><polygon points=".3,2.6 15.3,.4 9.6,15.4" fill="#b09a7a" stroke="#4a4034" stroke-width="1"/></svg>
<svg class="ic" style="left:26px;top:173px" width="16" height="16" viewBox="0 0 16 16"><path d="M1.4 2.8C5.6 -.4 13.6 .4 14.6 5.4 15.4 10 10 14.6 6 14.4 2.6 14 5.4 8 8.6 6.6 11.6 5.4 12.4 9.6 9.6 11.6 7 13.2 6.4 9 8.4 7.6" stroke="#111" stroke-width="1.2" fill="none"/><path d="M4.4 6C2.4 8.4 .6 11 .8 13.4L3.4 12" stroke="#111" stroke-width="1.4" fill="none"/></svg>
<svg class="ic" style="left:3px;top:201px" width="16" height="16" viewBox="0 0 16 16"><g transform="translate(7.9 7.8) rotate(-25)"><polygon points="0,-7.6 2.6,-3.4 .9,-3.6 .9,0 -.9,0 -.9,-3.6 -2.6,-3.4" fill="#d8141c" stroke="#8c0c10" stroke-width=".4"/></g><g transform="translate(7.9 7.8) rotate(65)"><polygon points="0,-7.6 2.6,-3.4 .9,-3.6 .9,0 -.9,0 -.9,-3.6 -2.6,-3.4" fill="#d8141c" stroke="#8c0c10" stroke-width=".4"/></g><g transform="translate(7.9 7.8) rotate(155)"><polygon points="0,-7.6 2.6,-3.4 .9,-3.6 .9,0 -.9,0 -.9,-3.6 -2.6,-3.4" fill="#d8141c" stroke="#8c0c10" stroke-width=".4"/></g><g transform="translate(7.9 7.8) rotate(245)"><polygon points="0,-7.6 2.6,-3.4 .9,-3.6 .9,0 -.9,0 -.9,-3.6 -2.6,-3.4" fill="#d8141c" stroke="#8c0c10" stroke-width=".4"/></g></svg>
<svg class="ic" style="left:26px;top:201px" width="16" height="16" viewBox="0 0 16 16"><polygon points=".2,8.6 7.2,7 14.4,9.2 6.6,12.2" fill="#d8c49a" stroke="#4a3c28" stroke-width=".6"/><polygon points=".2,8.6 6.6,12.2 6.6,15.4 .4,11.4" fill="#6a5a3c"/><polygon points="6.6,12.2 14.4,9.2 14.2,12.2 6.6,15.4" fill="#4a3c28"/><polygon points="6.8,.2 10,5.2 7.9,5 7.9,9.6 5.7,9.6 5.7,5 3.8,5.2" fill="#d8141c" stroke="#8c0c10" stroke-width=".4"/></svg>
<svg class="ic" style="left:3px;top:223px" width="16" height="16" viewBox="0 0 16 16"><path d="M1.8 6.6C3 2.4 8.6 .6 12.6 3.6" stroke="#d8141c" stroke-width="2.4" fill="none"/><polygon points="10.4,.4 15.6,6.2 9.4,6.4" fill="#d8141c"/><path d="M14 9.6C12.4 13.6 7 15.4 3.2 12.4" stroke="#d8141c" stroke-width="2.4" fill="none"/><polygon points="5.6,15.4 .2,10 6.6,9.6" fill="#d8141c"/></svg>
<svg class="ic" style="left:26px;top:223px" width="16" height="16" viewBox="0 0 16 16"><ellipse cx="8.6" cy="12.6" rx="5.4" ry="2.6" fill="#5a4a30"/><rect x="3.2" y="10.6" width="10.8" height="2" fill="#5a4a30"/><ellipse cx="8.6" cy="10.6" rx="5.4" ry="2.4" fill="#e0cca0" stroke="#4a3c28" stroke-width=".5"/><path d="M1 .6C8 .6 13.6 4.6 13.4 11" stroke="#a00c12" stroke-width="1" fill="none"/><polygon points="1.6,3.6 7.2,4.6 5.8,6 9.6,10 8,11.4 4.4,7.4 3,8.8" fill="#d8141c" stroke="#8c0c10" stroke-width=".4"/></svg>
<svg class="ic" style="left:3px;top:245px" width="16" height="16" viewBox="0 0 16 16"><polygon points=".4,3.6 10.4,.4 15.2,11 2.4,15.4" fill="#fff" stroke="#777" stroke-width=".9"/><polygon points="8.6,8.2 12.2,6.6 15.2,11 10.6,12.8" fill="#b09a7a" stroke="#4a4034" stroke-width=".6"/><polygon points="2,2.6 7,3.2 5.6,4.6 9,7.8 7.8,9 4.4,5.8 3,7.2" fill="#d8141c" stroke="#8c0c10" stroke-width=".4"/></svg>
<svg class="ic" style="left:26px;top:245px" width="16" height="16" viewBox="0 0 16 16"><path d="M3.6 15.4C-1.6 8.4 3.6 .2 14.8 2.2" stroke="#111" stroke-width="1.3" fill="none"/><path d="M7.6 11C5.4 7.4 8 4.4 12.4 5" stroke="#111" stroke-width="1.3" fill="none"/><polygon points="2.6,2.2 8.4,2.4 7.2,3.8 10.6,6.6 9.4,8 6,5.2 4.8,6.6" fill="#d8141c" stroke="#8c0c10" stroke-width=".4"/></svg>
<svg class="ic" style="left:3px;top:273px" width="16" height="16" viewBox="0 0 16 16"><ellipse cx="10" cy="12.6" rx="5.6" ry="1.6" fill="#b4b4b4"/><polygon points="0,12.6 6.4,9 7.6,11 1.2,14.8" fill="#f0c010" stroke="#3a3000" stroke-width=".7"/><path d="M2 12L3 13.6M3.8 11L4.8 12.6M5.4 10L6.4 11.6" stroke="#222" stroke-width=".6"/><path d="M5.2 2.4C6 .4 12.6 -.4 14 .8L14.4 8.4C13 10.4 7 10.6 5.6 9.4Z" fill="#2c2c2c"/><ellipse cx="10.8" cy="5.2" rx="2.6" ry="3.6" fill="#f4c410"/><rect x="5.6" y="3.2" width="2" height="2.4" fill="#f4c410"/></svg>
<svg class="ic" style="left:26px;top:273px" width="16" height="16" viewBox="0 0 16 16"><path d="M9 .6L14.8 7.2M1.6 8.6L8 15" stroke="#333" stroke-width="1"/><path d="M8.4 1.2L10.6 .2M8.6 2.6L11 1.4M1 9.2L3.2 8M1.4 10.6L3.6 9.4" stroke="#222" stroke-width=".9"/><circle cx="3.6" cy="3" r="2.1" fill="#ddd" stroke="#444" stroke-width=".8"/><path d="M3.6 .6V5.4M1.2 3H6" stroke="#444" stroke-width=".6"/><path d="M5 5L9 9" stroke="#bbb" stroke-width=".8"/></svg>
<svg class="ic" style="left:3px;top:295px" width="16" height="16" viewBox="0 0 16 16"><polygon points="4.6,14.8 15.6,6.6 15,5.6" fill="#9a9a9a"/><path d="M4.6 15C.6 12.6 -.6 8 1.6 4.4 4 1 9 -.4 13.8 .6Z" fill="#f0b810" stroke="#8a6400" stroke-width=".8"/><path d="M5.4 11.6C3.6 10 3.4 7.4 5 5.6 6.4 4.2 8.4 3.8 10.2 4.2Z" fill="#f0f0f0" stroke="#8a6400" stroke-width=".6"/><path d="M4.6 15L13.8 .6" stroke="#6a4c00" stroke-width=".7"/></svg>
<svg class="ic" style="left:26px;top:295px" width="16" height="16" viewBox="0 0 16 16"><rect x="1.9" y=".5" width="13.4" height="7" fill="#fff" stroke="#000" stroke-width="1"/><text x="8.6" y="6.4" font-family="Liberation Mono,monospace" font-weight="bold" font-size="6.4" text-anchor="middle" fill="#000" letter-spacing="-.2">AbC</text><path d="M1.9 7.5V14.6" stroke="#000" stroke-width="1"/><polygon points=".2,12.4 3.6,12.4 1.9,15.6" fill="#000"/></svg>
<svg class="ic" style="left:3px;top:317px" width="16" height="16" viewBox="0 0 16 16"><path d="M.4 13.6L13.2 6.6" stroke="#18a018" stroke-width="2"/><path d="M2.4 7L15 14.6" stroke="#d81818" stroke-width="2"/><polygon points="15.6,15 10.8,14.6 13.4,11.2" fill="#d81818"/><path d="M2.4 7L7 9.8" stroke="#7a1c1c" stroke-width="1.6"/><path d="M7.4 15.6V3.4" stroke="#1414b4" stroke-width="2.2"/><polygon points="7.4,-.2 10,4.6 4.8,4.6" fill="#1414d8"/><polygon points="13.6,6.2 9.6,7 11.4,9.6" fill="#18a018"/></svg>
<svg class="ic" style="left:26px;top:317px" width="16" height="16" viewBox="0 0 16 16"><polygon points="11,6 14.4,5 14,11.6 11.6,12.6" fill="#ddd" stroke="#999" stroke-width=".5"/><text x="7.4" y="15" font-family="Liberation Serif,serif" font-weight="bold" font-size="19" text-anchor="middle" fill="#6a5c44" stroke="#3a3224" stroke-width=".5" transform="skewX(-8)" style="transform-origin:8px 15px">A</text><path d="M3 14L8 1.4" stroke="#c8b890" stroke-width="1"/></svg>
<svg class="ic" style="left:3px;top:345px" width="16" height="16" viewBox="0 0 16 16"><path d="M.8 7.2C2 4 13.6 4.6 15 8.4 13.6 11 2.4 10.6 .8 7.2Z" fill="#3a86e8" stroke="#1a50a8" stroke-width=".6"/><path d="M9 .6C12.6 1 13.2 13 9.4 15.2 6.2 13.6 5.6 2 9 .6Z" fill="#3a86e8" stroke="#1a50a8" stroke-width=".6"/><ellipse cx="8.6" cy="9" rx="2.6" ry="2.8" fill="#fff"/><ellipse cx="3.6" cy="7.4" rx="1.6" ry=".9" fill="#fff"/><path d="M5.4 .6C4 3 4 5 5 7M8 15.4C10 15.8 13.6 12.6 15.2 9" stroke="#111" stroke-width="1" fill="none"/><path d="M13.4 8.6L15.4 8.4 15.6 10.6" stroke="#111" stroke-width="1" fill="none"/></svg>
<svg class="ic" style="left:26px;top:345px" width="16" height="16" viewBox="0 0 16 16"><path d="M.4 12.6C2 10.4 3.4 7 4 4.6 5 2.6 6.6 1.6 7.4 2 8.6 .6 9.8 .6 10.2 1.4 11.4 .4 12.4 .8 12.6 1.8 13.6 1.4 14.4 2.4 13.6 4L11.2 8.4 15.4 8.6C15.8 9.4 15 10.4 13.6 10.6L4.6 15.4Z" fill="#fff" stroke="#111" stroke-width=".9"/><path d="M7.4 2L6 5.6M10.2 1.4L8.6 5.6M12.6 1.8L10.6 6" stroke="#111" stroke-width=".8"/></svg>
<svg class="ic" style="left:3px;top:367px" width="16" height="16" viewBox="0 0 16 16"><path d="M8 8L14.4 14.4" stroke="#111" stroke-width="2" stroke-linecap="round"/><circle cx="5.2" cy="5" r="3.8" fill="#8cbce0" stroke="#10222c" stroke-width="1.3"/><ellipse cx="4.6" cy="4.2" rx="1.9" ry="1.33" fill="#b8d8f0"/></svg>
<svg class="ic" style="left:26px;top:367px" width="16" height="16" viewBox="0 0 16 16"><g transform="translate(7.2 6.6) rotate(-45)"><polygon points="0,-8 2.4,-4.6 -2.4,-4.6" fill="#3a78d8"/></g><g transform="translate(7.2 6.6) rotate(45)"><polygon points="0,-8 2.4,-4.6 -2.4,-4.6" fill="#3a78d8"/></g><g transform="translate(7.2 6.6) rotate(135)"><polygon points="0,-8 2.4,-4.6 -2.4,-4.6" fill="#3a78d8"/></g><g transform="translate(7.2 6.6) rotate(225)"><polygon points="0,-8 2.4,-4.6 -2.4,-4.6" fill="#3a78d8"/></g><path d="M9.4 8.8L14.8 14.4" stroke="#111" stroke-width="2.2" stroke-linecap="round"/><circle cx="7.2" cy="6.4" r="3.3" fill="#8cbce0" stroke="#10222c" stroke-width="1.3"/><ellipse cx="6.6" cy="5.6" rx="1.65" ry="1.155" fill="#b8d8f0"/></svg>
<svg class="ic" style="left:3px;top:389px" width="16" height="16" viewBox="0 0 16 16"><circle cx="4" cy="4.6" r="3.4" fill="#8cbce0" stroke="#10222c" stroke-width="1.3"/><ellipse cx="3.4" cy="3.8" rx="1.7" ry="1.19" fill="#b8d8f0"/><path d="M8 9L15 15" stroke="#111" stroke-width="2.2" stroke-linecap="round"/><polygon points="5.2,6.4 9.6,2.8 15.2,5.4 14,10 10.6,11 8,12.6 5.6,11.4" fill="#2a74e4" stroke="#1a4aa8" stroke-width=".5"/><path d="M10 7.4L12.6 5.8" stroke="#0a2a7a" stroke-width="1.4" stroke-dasharray="1.2 .8"/><path d="M5.4 13.6H8" stroke="#aaa" stroke-width="1"/></svg>
<svg class="ic" style="left:26px;top:389px" width="16" height="16" viewBox="0 0 16 16"><circle cx="12" cy="4.6" r="3.4" fill="#8cbce0" stroke="#10222c" stroke-width="1.3"/><ellipse cx="11.4" cy="3.8" rx="1.7" ry="1.19" fill="#b8d8f0"/><path d="M8 9L1.4 15" stroke="#111" stroke-width="2.2" stroke-linecap="round"/><polygon points="10.8,6.4 6.4,2.8 .8,5.4 2,10 5.4,11 8,12.6 10.4,11.4" fill="#2a74e4" stroke="#1a4aa8" stroke-width=".5"/><path d="M3 6.6L5.6 8.2" stroke="#0a2a7a" stroke-width="1.4" stroke-dasharray="1.2 .8"/><path d="M8 13.6H10.6" stroke="#aaa" stroke-width="1"/></svg>
<svg class="ic" style="left:3px;top:417px" width="16" height="16" viewBox="0 0 16 16"><path d="M3 15.4L11.8 11.2M3.2 11.2L12 15.4" stroke="#e81c24" stroke-width="1.1"/><path d="M7.6 0C8.4 1.6 10.6 3.4 10.8 5.6 11 7.6 10.4 9 9.6 10L9.2 12.8H6L5.8 10C4.8 9 4.2 7 4.8 5.4 5.2 3.6 6.6 2.4 7.6 0Z" fill="#000"/><path d="M7.8 3.4C8.8 4.6 9 6.6 8.4 8.4L7.4 9.2C6.4 8 6.4 5 7.8 3.4Z" fill="#fff"/><ellipse cx="7.6" cy="11.6" rx=".7" ry=".9" fill="#fff"/></svg>
<svg class="ic" style="left:26px;top:417px" width="16" height="16" viewBox="0 0 16 16"><path d="M.6 7.4C3 2.6 11 1.4 15 5.4" stroke="#222" stroke-width="1.8" fill="none"/><path d="M1 8C4 4.6 11 4.4 14.4 7.4 11 11.4 4.6 11.6 1 8Z" fill="#e8e8e8" stroke="#333" stroke-width=".8"/><circle cx="7.6" cy="7.6" r="2.5" fill="#333"/><circle cx="6.8" cy="6.8" r=".8" fill="#eee"/><path d="M2.4 10.4C5 13 11 13 14 10" stroke="#b4b4b4" stroke-width="1" fill="none"/></svg>
<svg class="ic" style="left:3px;top:439px" width="16" height="16" viewBox="0 0 16 16"><ellipse cx="4.4" cy="8" rx="2.4" ry="3.6" fill="#000" transform="rotate(-8 4.4 8)"/><ellipse cx="5.4" cy="14" rx="1.6" ry="1.4" fill="#000"/><ellipse cx="11.6" cy="4.6" rx="2.5" ry="3.8" fill="#000" transform="rotate(6 11.6 4.6)"/><ellipse cx="10.8" cy="10.6" rx="1.6" ry="1.4" fill="#000"/></svg>
<svg class="ic" style="left:26px;top:439px" width="16" height="16" viewBox="0 0 16 16"><circle cx="7.2" cy="7.8" r="5.4" fill="#fff" stroke="#111" stroke-width="1"/><path d="M0 7.8H15" stroke="#000" stroke-width="1.3"/><path d="M8.4 .6L15.4 7.8 8.4 15.2" stroke="#000" stroke-width="1.7" fill="none" stroke-linejoin="miter"/><path d="M5.6 5.4C6.6 4 8.4 4 9.4 5.4" stroke="#000" stroke-width="1" fill="none"/><path d="M5 10V11.4M7 10.2H10M7.4 10.2V11.6M9.6 10.2V11.6" stroke="#000" stroke-width=".9"/></svg>
<svg class="ic" style="left:3px;top:1028px" width="20" height="20" viewBox="0 0 20 20"><circle cx="10" cy="10" r="8.6" fill="#fbf1dc" stroke="#8a6414" stroke-width="2.5"/><circle cx="10" cy="10" r="7.4" fill="none" stroke="#e8c88c" stroke-width=".8"/><ellipse cx="10" cy="7.6" rx="2.6" ry="3.2" fill="#f4a8a0" stroke="#c89c8c" stroke-width=".6"/><path d="M10 10.6V15.6" stroke="#b8a890" stroke-width="1.4"/></svg>
<svg class="ic" style="left:31px;top:1028px" width="20" height="20" viewBox="0 0 20 20"><circle cx="10" cy="10" r="8.6" fill="#fbf1dc" stroke="#8a6414" stroke-width="2.5"/><circle cx="10" cy="10" r="7.4" fill="none" stroke="#e8c88c" stroke-width=".8"/><circle cx="10" cy="5" r="1.5" fill="#000"/><path d="M7.6 7.2H12.4L12.2 12 11.4 12.2 11.2 16.4H8.8L8.6 12.2 7.8 12Z" fill="#000"/></svg>
<svg class="ic" style="left:59px;top:1028px" width="20" height="20" viewBox="0 0 20 20"><circle cx="10" cy="10" r="8.6" fill="#fbf1dc" stroke="#8a6414" stroke-width="2.5"/><circle cx="10" cy="10" r="7.4" fill="none" stroke="#e8c88c" stroke-width=".8"/><text x="10.2" y="15.6" font-family="Liberation Serif,serif" font-size="16.5" text-anchor="middle" fill="#8a8270">G</text></svg>
<div class="abs" style="left:88px;top:1027px;width:1px;height:21px;background:#a0a0a0"></div>
<svg class="ic" style="left:97px;top:1028px" width="20" height="20" viewBox="0 0 20 20"><defs><radialGradient id="hg" cx=".4" cy=".6" r=".7"><stop offset="0" stop-color="#fff"/><stop offset=".6" stop-color="#e8f2fc"/><stop offset="1" stop-color="#a8c8e8"/></radialGradient></defs><circle cx="10" cy="10" r="8.7" fill="url(#hg)" stroke="#1c506c" stroke-width="2.2"/><text x="10" y="15.8" font-family="Liberation Sans,sans-serif" font-weight="bold" font-size="16" text-anchor="middle" fill="#000">?</text></svg>
<div class="abs" style="left:122px;top:1027px;width:1446px;height:22px;border-top:1px solid #a0a0a0;border-left:1px solid #a0a0a0;border-right:1px solid #fff;border-bottom:1px solid #fff;background:#f0f0f0"></div>
<div class="t" style="left:124.5px;top:1031.5px;font-size:13px;letter-spacing:-.05px" id="stt">Wählen Sie Objekte aus. Drücken Sie die Umschalttaste, um die Auswahl zu erweitern. Ziehen Sie mit der Maus, um mehrere Objekte auszuwählen.</div>
<div class="abs" style="left:1575px;top:1027px;width:1px;height:21px;background:#a0a0a0"></div>
<div class="t" style="left:1633px;top:1031.5px;font-size:13px;letter-spacing:-.2px">Maßangab</div>
</body></html>
